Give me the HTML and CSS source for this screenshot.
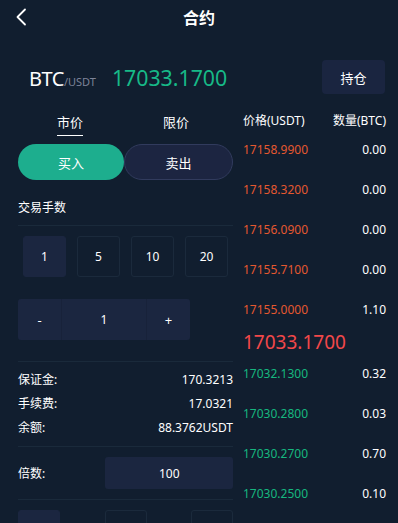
FILE: index.html
```html
<!DOCTYPE html>
<html lang="zh">
<head>
<meta charset="utf-8">
<link rel="stylesheet" href="styles.css">
</head>
<body>
<div class="page">
  <header class="topbar">
    <svg class="back" width="12" height="18" viewBox="0 0 12 18"><path d="M10 1.5 L2.5 9 L10 16.5" fill="none" stroke="#fff" stroke-width="1.8" stroke-linecap="round" stroke-linejoin="round"/></svg>
    <div class="title">合约</div>
  </header>

  <div class="ticker">
    <div class="pair"><span class="base">BTC</span><span class="quote">/USDT</span><span class="last">17033.1700</span></div>
    <div class="hold">持仓</div>
  </div>

  <main class="main">
    <section class="left">
      <div class="tabs">
        <div class="tab active">市价</div>
        <div class="tab">限价</div>
      </div>
      <div class="sides">
        <div class="side buy">买入</div>
        <div class="side sell">卖出</div>
      </div>
      <div class="label">交易手数</div>
      <div class="rule"></div>
      <div class="lots">
        <div class="lot selected">1</div>
        <div class="lot">5</div>
        <div class="lot">10</div>
        <div class="lot">20</div>
      </div>
      <div class="stepper">
        <div class="step">-</div>
        <div class="count">1</div>
        <div class="step">+</div>
      </div>
      <div class="rule r2"></div>
      <div class="info">
        <div class="inforow"><span>保证金:</span><span>170.3213</span></div>
        <div class="inforow"><span>手续费:</span><span>17.0321</span></div>
        <div class="inforow"><span>余额:</span><span>88.3762USDT</span></div>
      </div>
      <div class="rule r3"></div>
      <div class="mult">
        <span>倍数:</span>
        <div class="multbox">100</div>
      </div>
      <div class="rule r3"></div>
      <div class="bottoms">
        <div class="bbox selected"></div>
        <div class="bbox"></div>
        <div class="bbox"></div>
      </div>
    </section>

    <section class="book">
      <div class="bookhead"><span>价格(USDT)</span><span>数量(BTC)</span></div>
      <div class="brow ask"><span>17158.9900</span><span>0.00</span></div>
      <div class="brow ask"><span>17158.3200</span><span>0.00</span></div>
      <div class="brow ask"><span>17156.0900</span><span>0.00</span></div>
      <div class="brow ask"><span>17155.7100</span><span>0.00</span></div>
      <div class="brow ask"><span>17155.0000</span><span>1.10</span></div>
      <div class="mid">17033.1700</div>
      <div class="brow bid"><span>17032.1300</span><span>0.32</span></div>
      <div class="brow bid"><span>17030.2800</span><span>0.03</span></div>
      <div class="brow bid"><span>17030.2700</span><span>0.70</span></div>
      <div class="brow bid"><span>17030.2500</span><span>0.10</span></div>
    </section>
  </main>
</div>
</body>
</html>
```

FILE: styles.css
```css
* { box-sizing: border-box; margin: 0; padding: 0; }
html, body { background: #111e2f; }
body {
  width: 398px;
  height: 523px;
  overflow: hidden;
  color: #fff;
  font-family: "Noto Sans", "Noto Sans CJK SC", sans-serif;
  font-size: 12px;
}
.page { width: 398px; }

.topbar {
  position: relative;
  height: 36px;
  display: flex;
  align-items: center;
  justify-content: center;
}
.back { position: absolute; left: 15px; top: 8px; }
.title { font-size: 16px; font-weight: 700; line-height: 36px; }

.ticker {
  margin-top: 24px;
  height: 34px;
  padding: 0 13px 0 29px;
  display: flex;
  align-items: center;
  justify-content: space-between;
}
.pair { display: flex; align-items: baseline; }
.base { font-size: 20px; letter-spacing: -0.5px; }
.quote { font-size: 11px; color: #7d8399; margin-right: 16px; }
.last { font-size: 21.3px; color: #17b987; }
.hold {
  width: 63px;
  height: 34px;
  background: #1a2540;
  border-radius: 4px;
  display: flex;
  align-items: center;
  justify-content: center;
  font-size: 13px;
}

.main {
  margin-top: 6px;
  display: flex;
  gap: 10px;
}
.left { width: 233px; padding-left: 18px; }

.tabs { margin-top: 12px; height: 24px; display: flex; }
.tab { font-size: 13px; line-height: 20px; height: 24px; }
.tab:first-child { margin-left: 39px; }
.tab + .tab { margin-left: 80px; }
.tab.active { border-bottom: 1.5px solid #fff; }

.sides { margin-top: 8px; display: flex; height: 36px; }
.side {
  flex: 1;
  display: flex;
  align-items: center;
  justify-content: center;
  border-radius: 18px;
  font-size: 13px;
}
.buy { background: #1dae8e; width: 106px; flex: none; }
.sell { background: #1c2541; border: 1px solid #313b5d; }

.label { margin-top: 18px; line-height: 20px; font-size: 12px; }
.rule { height: 1px; background: #1a2a3b; margin-top: 7px; }
.r2 { margin-top: 21px; }
.r3 { margin-top: 6px; }

.lots {
  margin-top: 10px;
  padding-left: 5px;
  display: flex;
  gap: 11px;
}
.lot {
  width: 43px;
  height: 41px;
  border: 1px solid #1b2a3c;
  border-radius: 3px;
  display: flex;
  align-items: center;
  justify-content: center;
  font-size: 12px;
}
.lot.selected { background: #1b2640; border-color: #1b2640; }

.stepper {
  margin-top: 22px;
  width: 172px;
  height: 41px;
  display: flex;
  background: #1b2640;
  border-radius: 3px;
}
.step { width: 43px; display: flex; align-items: center; justify-content: center; font-size: 13px; }
.count { flex: 1; display: flex; align-items: center; justify-content: center; font-size: 12px;
  border-left: 1px solid #18223a; border-right: 1px solid #18223a; }

.info { margin-top: 6px; }
.inforow { display: flex; justify-content: space-between; line-height: 24px; font-size: 12px; }

.mult { margin-top: 10px; display: flex; align-items: center; justify-content: space-between; height: 32px; }
.multbox {
  width: 128px;
  height: 32px;
  background: #1b2640;
  border-radius: 3px;
  display: flex;
  align-items: center;
  padding-left: 54px;
  font-size: 12px;
}
.mult + .rule { margin-top: 10px; }

.bottoms { margin-top: 10px; display: flex; justify-content: space-between; }
.bbox { width: 42px; height: 41px; border: 1px solid #1b2a3c; border-radius: 3px; }
.bbox.selected { background: #1b2640; border-color: #1b2640; }

.book { width: 143px; }
.bookhead {
  margin-top: 12px;
  height: 18px;
  line-height: 18px;
  display: flex;
  justify-content: space-between;
  font-size: 12px;
}
.brow {
  height: 40px;
  line-height: 40px;
  display: flex;
  justify-content: space-between;
  font-size: 12px;
}
.ask span:first-child { color: #e5582f; }
.bid span:first-child { color: #16b77f; }
.mid { height: 24px; line-height: 24px; font-size: 19px; color: #f2484a; }
```
